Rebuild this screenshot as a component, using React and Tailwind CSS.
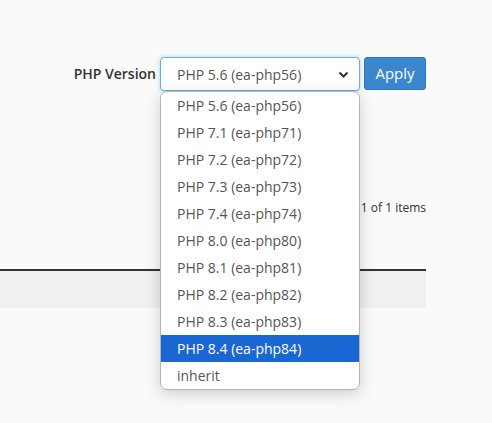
import React from "react";

const items = [
  "PHP 5.6 (ea-php56)",
  "PHP 7.1 (ea-php71)",
  "PHP 7.2 (ea-php72)",
  "PHP 7.3 (ea-php73)",
  "PHP 7.4 (ea-php74)",
  "PHP 8.0 (ea-php80)",
  "PHP 8.1 (ea-php81)",
  "PHP 8.2 (ea-php82)",
  "PHP 8.3 (ea-php83)",
  "PHP 8.4 (ea-php84)",
  "inherit",
];

export default function App() {
  return (
    <div
      className="w-[492px] h-[423px] bg-[#fafafa] overflow-hidden"
      style={{ fontFamily: '"Open Sans", sans-serif' }}
    >
      <div className="w-[426px] pt-[57px]">
        <div className="flex justify-end items-start">
          <label className="text-[14px] font-semibold text-[#333] mt-[6px] mr-[4px]">PHP Version</label>
          <div className="relative">
            <div className="w-[200px] h-[34px] border border-[#66afe9] rounded-[4px] bg-white flex items-center pl-[16px] pr-[10px] text-[14px] text-[#555] shadow-[0_0_4px_rgba(102,175,233,0.5)]">
              <span className="flex-1">PHP 5.6 (ea-php56)</span>
              <svg width="11" height="8" viewBox="0 0 11 8" className="mt-[1px]">
                <path d="M1.5 1.5 L5.5 5.5 L9.5 1.5" fill="none" stroke="#333" strokeWidth="2" />
              </svg>
            </div>
            <div className="absolute left-0 top-[34px] w-[200px] bg-white border border-[#b5b5b5] rounded-[7px] overflow-hidden shadow-[0_4px_16px_rgba(0,0,0,0.18)] z-10">
              {items.map((it, i) => (
                <div
                  key={it}
                  className={
                    i === 9
                      ? "h-[27px] pl-[16px] flex items-center text-[14px] bg-[#1a66d3] text-white"
                      : "h-[27px] pl-[16px] flex items-center text-[14px] text-[#555]"
                  }
                >
                  {it}
                </div>
              ))}
            </div>
          </div>
          <button className="ml-[4px] w-[62px] h-[33px] bg-[#3a87d0] border border-[#2d74b8] rounded-[3px] text-white text-[15px]">
            Apply
          </button>
        </div>
        <div className="flex justify-end mt-[108px] text-[12px] text-[#333]">1 of 1 items</div>
        <div className="mt-[52px] h-[2px] bg-[#333]" />
        <div className="h-[37px] bg-[#f0f0f0]" />
      </div>
    </div>
  );
}
